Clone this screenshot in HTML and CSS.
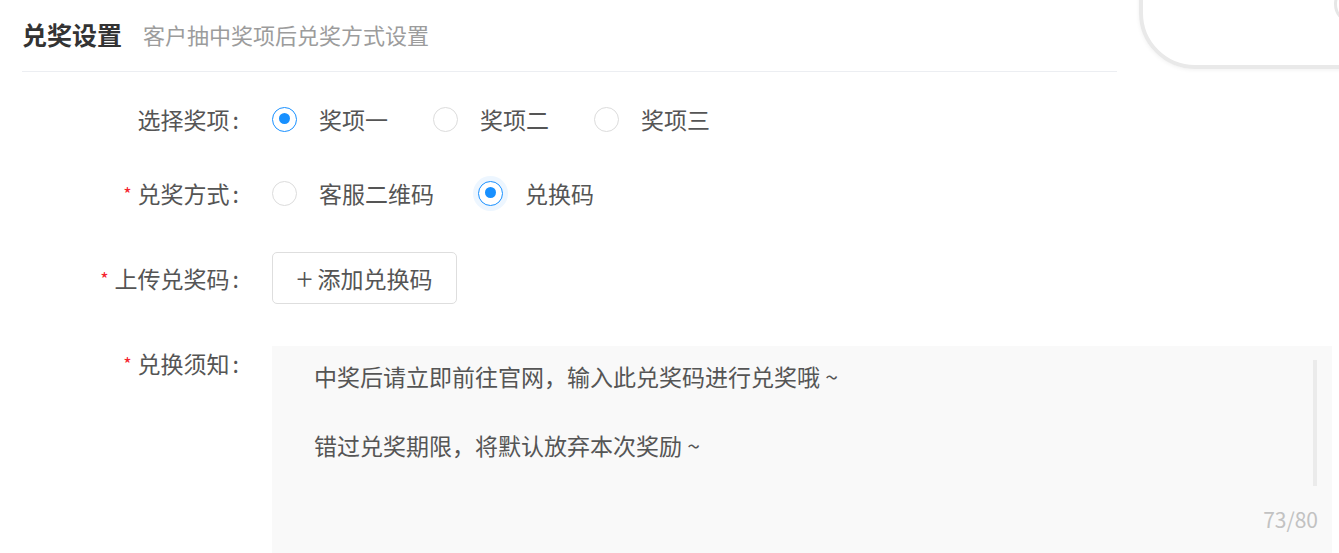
FILE: index.html
```html
<!DOCTYPE html>
<html lang="zh-CN">

<head>
    <meta charset="UTF-8">
    <meta name="viewport" content="width=device-width, initial-scale=1.0">
    <title>兑奖设置</title>
    <link rel="stylesheet" href="styles.css">
</head>

<body>
    <div class="preview-frame"></div>
    <div class="preview-dot"></div>

    <div class="section">
        <div class="section-head">
            <h2 class="title">兑奖设置</h2>
            <span class="subtitle">客户抽中奖项后兑奖方式设置</span>
        </div>

        <div class="form">
            <div class="row row-prize">
                <label class="label">选择奖项</label>
                <div class="options">
                    <span class="option"><span class="radio checked"></span>奖项一</span>
                    <span class="option"><span class="radio"></span>奖项二</span>
                    <span class="option"><span class="radio"></span>奖项三</span>
                </div>
            </div>

            <div class="row row-way">
                <label class="label required">兑奖方式</label>
                <div class="options">
                    <span class="option"><span class="radio"></span>客服二维码</span>
                    <span class="option"><span class="radio checked focus"></span>兑换码</span>
                </div>
            </div>

            <div class="row row-upload">
                <label class="label required">上传兑奖码</label>
                <button class="add-btn"><span class="plus">+</span>添加兑换码</button>
            </div>

            <div class="row row-notice">
                <label class="label required">兑换须知</label>
                <div class="notice">
                    <p>中奖后请立即前往官网，输入此兑奖码进行兑奖哦 ~</p>
                    <p>&nbsp;</p>
                    <p>错过兑奖期限，将默认放弃本次奖励 ~</p>
                    <span class="scroll-bar"></span>
                    <span class="count">73/80</span>
                </div>
            </div>
        </div>
    </div>
</body>

</html>
```

FILE: styles.css
```css
body {
    margin: 0;
    background-color: #fff;
    font-family: "Noto Sans CJK SC", "Noto Sans", sans-serif;
    color: #555;
    overflow: hidden;
}

/* 右上角的预览框 */
.preview-frame {
    position: absolute;
    left: 1139px;
    top: -60px;
    width: 260px;
    height: 121px;
    border: 4px solid #e9e9e9;
    border-radius: 56px;
    box-shadow: 0 1px 4px rgba(0, 0, 0, 0.06);
}

.preview-dot {
    position: absolute;
    left: 1334px;
    top: -14px;
    width: 24px;
    height: 30px;
    border: 3px solid #e6e6e6;
    border-radius: 50%;
}

.section {
    padding-left: 22px;
}

.section-head {
    display: flex;
    align-items: center;
    width: 1095px;
    height: 72px;
    box-sizing: border-box;
    border-bottom: 1px solid #eceef2;
    padding-bottom: 4px;
}

.title {
    margin: 0;
    font-size: 25px;
    font-weight: bold;
    color: #333;
}

.subtitle {
    margin-left: 21px;
    font-size: 22px;
    color: #9c9c9c;
}

.form {
    padding-top: 27px;
}

.row {
    display: flex;
    align-items: center;
}

.label {
    width: 223px;
    text-align: right;
    font-size: 23px;
    color: #555;
    margin-right: 27px;
    line-height: 34px;
}

.label::after {
    content: ":";
    margin: 0 6px 0 3px;
}

.required::before {
    content: "*";
    color: #f5222d;
    font-size: 18px;
    margin-right: 6px;
    vertical-align: 2px;
}

.row-prize {
    height: 40px;
}

.row-way {
    height: 40px;
    margin-top: 34px;
}

.row-upload {
    height: 52px;
    margin-top: 39px;
}

.row-notice {
    margin-top: 42px;
    align-items: flex-start;
}

.options {
    display: flex;
    align-items: center;
}

.option {
    display: flex;
    align-items: center;
    font-size: 23px;
    color: #555;
    margin-right: 45px;
}

.radio {
    position: relative;
    width: 25px;
    height: 25px;
    box-sizing: border-box;
    border: 1.5px solid #dcdcdc;
    border-radius: 50%;
    margin-right: 22px;
    background: #fff;
}

.radio.checked {
    border-color: #1890ff;
}

.radio.checked::after {
    content: "";
    position: absolute;
    left: 5.5px;
    top: 5.5px;
    width: 11px;
    height: 11px;
    border-radius: 50%;
    background-color: #1890ff;
}

.radio.focus {
    box-shadow: 0 0 0 5px rgba(24, 144, 255, 0.08);
}

.row-way .option:first-child {
    margin-right: 44px;
}

.add-btn {
    height: 52px;
    width: 185px;
    border: 1.5px solid #dedede;
    border-radius: 5px;
    background: #fff;
    font-family: inherit;
    font-size: 23px;
    color: #555;
    display: flex;
    align-items: center;
    justify-content: center;
    padding: 0;
}

.plus {
    font-size: 30px;
    font-weight: 300;
    margin-right: 5px;
    line-height: 1;
    margin-top: -3px;
}

.notice {
    position: relative;
    width: 1060px;
    height: 207px;
    box-sizing: border-box;
    background-color: #f9f9f9;
    padding: 13px 42px;
}

.notice p {
    margin: 0;
    font-size: 23px;
    line-height: 34.5px;
    color: #555;
}

.scroll-bar {
    position: absolute;
    right: 15px;
    top: 14px;
    width: 4px;
    height: 126px;
    background-color: #ebebeb;
}

.count {
    position: absolute;
    right: 14px;
    bottom: 19px;
    font-size: 21px;
    color: #c2c2c2;
}
```
